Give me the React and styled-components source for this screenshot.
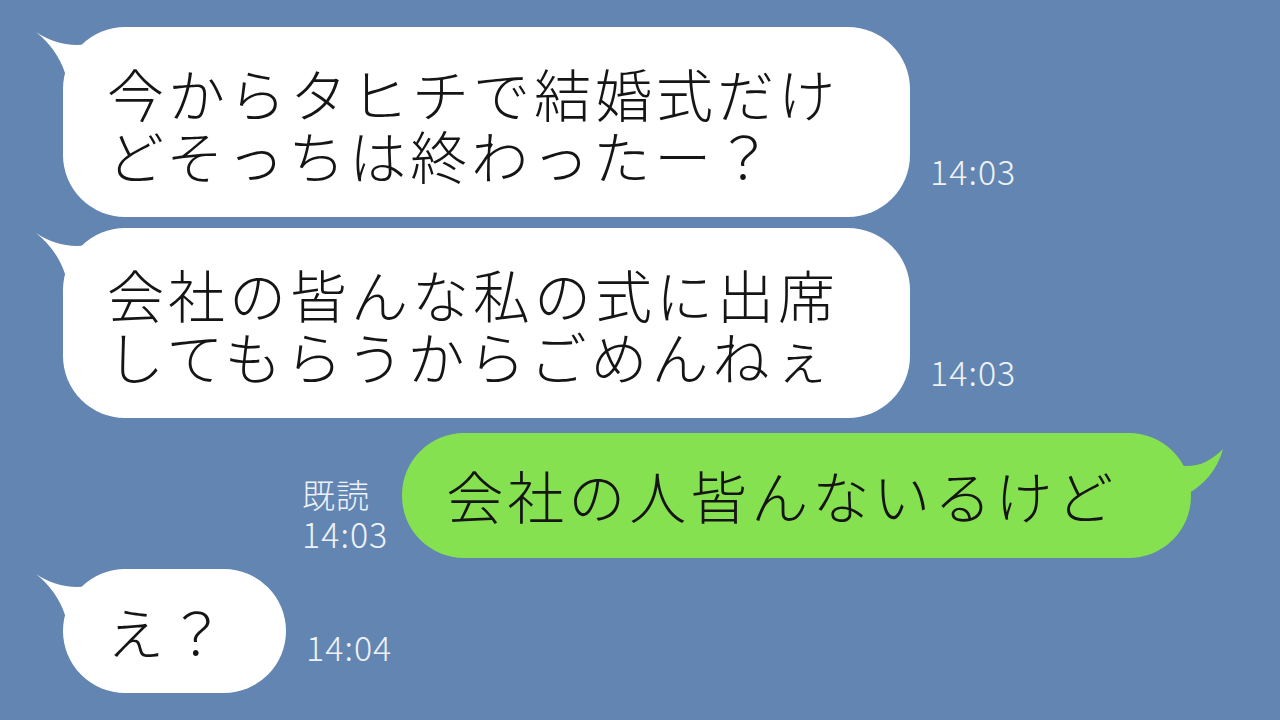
import React from "react";
import styled, { createGlobalStyle } from "styled-components";

const BLUE = "#6385b1";
const GREEN = "#86e150";

const GlobalStyle = createGlobalStyle`
  html, body {
    margin: 0;
    padding: 0;
    background: ${BLUE};
  }
  body {
    width: 1280px;
    height: 720px;
    overflow: hidden;
    font-family: "Noto Sans CJK JP", "Noto Sans", sans-serif;
  }
`;

const messages = [
  { id: 1, side: "left", lines: ["今からタヒチで結婚式だけ", "どそっちは終わったー？"], time: "14:03", pad: "34px 71px 32px 44px" },
  { id: 2, side: "left", lines: ["会社の皆んな私の式に出席", "してもらうからごめんねぇ"], time: "14:03", pad: "34px 71px 32px 44px" },
  { id: 3, side: "right", lines: ["会社の人皆んないるけど"], time: "14:03", read: true, pad: "30px 74px 33px 44px" },
  { id: 4, side: "left", lines: ["え？"], time: "14:04", pad: "30px 57px 32px 44px" },
];

const LeftTail = ({ color }) => (
  <TailSvg $side="left" width="70" height="60" viewBox="0 0 70 60">
    <path d="M3 5 C20 16 38 21 62 16 L62 60 L32 46 C27 30 16 15 3 5 Z" fill={color} />
  </TailSvg>
);

const RightTail = ({ color }) => (
  <TailSvg $side="right" width="70" height="60" viewBox="0 0 70 60">
    <path d="M64 16 C52 28 40 34 24 33 L0 33 L0 60 L30 60 C44 52 58 38 64 16 Z" fill={color} />
  </TailSvg>
);

const Lines = ({ lines }) => (
  <Text>
    {lines.map((l, i) => (
      <React.Fragment key={l}>
        {i > 0 && <br />}
        {l}
      </React.Fragment>
    ))}
  </Text>
);

export default function App() {
  return (
    <>
      <GlobalStyle />
      <Chat>
        {messages.map((m) =>
          m.side === "left" ? (
            <Row key={m.id}>
              <Bubble $bg="#fff" $pad={m.pad}>
                <LeftTail color="#fff" />
                <Lines lines={m.lines} />
              </Bubble>
              <Meta>
                <Time>{m.time}</Time>
              </Meta>
            </Row>
          ) : (
            <Row key={m.id} $indent>
              <Meta $right>
                <Time>
                  {m.read && (
                    <>
                      <Read>既読</Read>
                      <br />
                    </>
                  )}
                  {m.time}
                </Time>
              </Meta>
              <Bubble $bg={GREEN} $pad={m.pad}>
                <RightTail color={GREEN} />
                <Lines lines={m.lines} />
              </Bubble>
            </Row>
          )
        )}
      </Chat>
    </>
  );
}

const Chat = styled.div`
  display: flex;
  flex-direction: column;
  gap: 11px;
  padding: 27px 0 0 63px;
`;

const Row = styled.div`
  display: flex;
  align-items: flex-end;
  margin-left: ${(p) => (p.$indent ? "239px" : "0")};
  margin-top: ${(p) => (p.$indent ? "4px" : "0")};
`;

const Bubble = styled.div`
  position: relative;
  background: ${(p) => p.$bg};
  border-radius: 62px;
  padding: ${(p) => p.$pad};
  color: #151515;
  font-size: 57px;
  font-weight: 300;
  letter-spacing: 4px;
  line-height: 62px;
`;

const Text = styled.div`
  white-space: nowrap;
`;

const TailSvg = styled.svg`
  position: absolute;
  top: 0;
  ${(p) => (p.$side === "left" ? "left: -30px;" : "right: -38px;")}
`;

const Meta = styled.div`
  display: flex;
  flex-direction: column;
  align-items: flex-start;
  padding: ${(p) => (p.$right ? "0 14px 4px 0" : "0 0 26px 20px")};
  color: #eef2f8;
  font-weight: 300;
`;

const Time = styled.span`
  font-size: 34px;
  line-height: 40px;
  letter-spacing: 1px;
`;

const Read = styled.span`
  font-size: 33px;
`;
